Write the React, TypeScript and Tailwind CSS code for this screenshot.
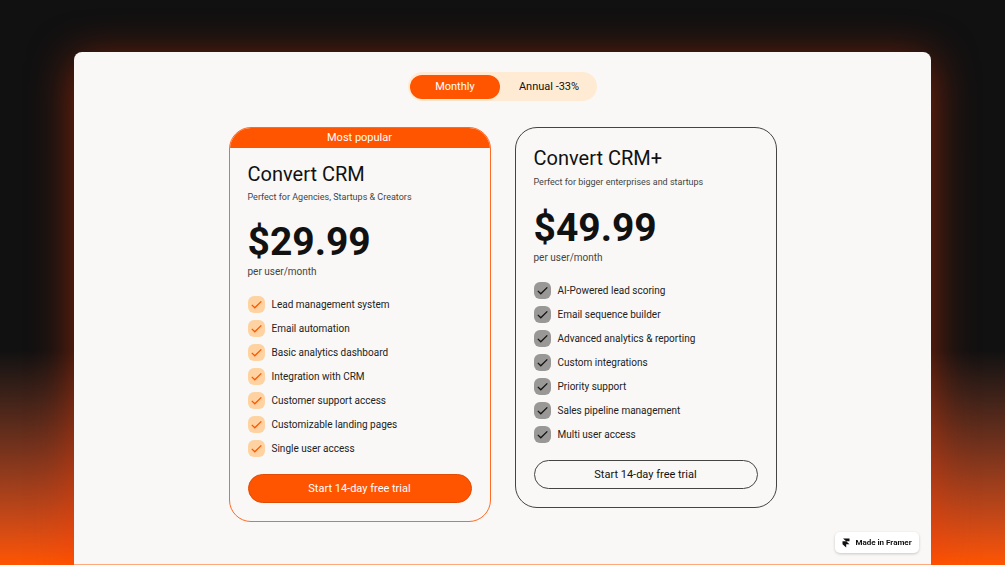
import React, { useState } from 'react';

type Plan = {
  name: string;
  tagline: string;
  price: string;
  features: string[];
  popular?: boolean;
};

const plans: Plan[] = [
  {
    name: 'Convert CRM',
    tagline: 'Perfect for Agencies, Startups & Creators',
    price: '$29.99',
    popular: true,
    features: [
      'Lead management system',
      'Email automation',
      'Basic analytics dashboard',
      'Integration with CRM',
      'Customer support access',
      'Customizable landing pages',
      'Single user access',
    ],
  },
  {
    name: 'Convert CRM+',
    tagline: 'Perfect for bigger enterprises and startups',
    price: '$49.99',
    features: [
      'AI-Powered lead scoring',
      'Email sequence builder',
      'Advanced analytics & reporting',
      'Custom integrations',
      'Priority support',
      'Sales pipeline management',
      'Multi user access',
    ],
  },
];

function CheckIcon() {
  return (
    <svg viewBox="0 0 17 17" className="size-full" fill="none" stroke="currentColor" strokeWidth="1.3" aria-hidden="true">
      <path d="M3.8 8.9 6.8 11.8 13.3 5.4" />
    </svg>
  );
}

function BillingToggle() {
  const [billing, setBilling] = useState('monthly');
  const base = 'h-6 rounded-full pt-px text-[11px] cursor-pointer';
  const active = 'bg-[#ff5500] text-white';

  return (
    <div className="flex items-center rounded-full bg-[#ffebd3] p-0.5 h-[29px]">
      <button
        type="button"
        aria-pressed={billing === 'monthly'}
        onClick={() => setBilling('monthly')}
        className={`${base} w-[90px] ${billing === 'monthly' ? active : 'text-[#111111]'}`}
      >
        Monthly
      </button>
      <button
        type="button"
        aria-pressed={billing === 'annual'}
        onClick={() => setBilling('annual')}
        className={`${base} px-4 ml-[3px] ${billing === 'annual' ? active : 'text-[#111111]'}`}
      >
        Annual -33%
      </button>
    </div>
  );
}

function PlanCard({ plan }: { plan: Plan }) {
  const { popular } = plan;

  return (
    <article
      className={`w-[262px] rounded-[22px] border overflow-hidden ${popular ? 'border-[#ff6a26]' : 'border-[#444444]'}`}
    >
      {popular && (
        <div className="bg-[#ff5500] h-5 text-center text-[11px] leading-5 text-white">Most popular</div>
      )}
      <div className={`px-[18px] pb-[18px] ${popular ? 'pt-3' : 'pt-4'}`}>
        <h2 className="text-[20px] leading-7 text-[#111111]">{plan.name}</h2>
        <p className={`text-[9px] leading-3 text-[#444444] ${popular ? 'mt-[3px]' : 'mt-1'}`}>{plan.tagline}</p>
        <p className={`text-[39px] leading-[44px] font-bold text-[#111111] ${popular ? 'mt-[17px]' : 'mt-[18px]'}`}>
          {plan.price}
        </p>
        <p className="text-[10px] leading-4 text-[#444444]">per user/month</p>
        <ul className="mt-4 flex flex-col gap-[7px]">
          {plan.features.map((feature) => (
            <li key={feature} className="flex items-center gap-[7px] text-[10px] leading-[17px] text-[#222222]">
              <span
                className={`size-[17px] shrink-0 rounded-[6px] ${popular ? 'bg-[#ffd3a1] text-[#ff5500]' : 'bg-[#999896] text-[#111111]'}`}
              >
                <CheckIcon />
              </span>
              {feature}
            </li>
          ))}
        </ul>
        <button
          type="button"
          className={`mt-[17px] h-[29px] w-full rounded-full border pt-px text-[11px] cursor-pointer ${popular ? 'border-[#e04c04] bg-[#ff5500] text-white' : 'border-[#444444] text-[#111111]'}`}
        >
          Start 14-day free trial
        </button>
      </div>
    </article>
  );
}

function FramerBadge() {
  return (
    <a
      href="#framer"
      className="fixed bottom-3 right-[86px] flex h-[21px] w-[84px] items-center justify-center gap-[5px] rounded-[5px] bg-white text-[8px] font-bold text-[#111111] shadow-[0_1px_3px_rgba(0,0,0,0.2)]"
    >
      <svg viewBox="0 0 8 10" className="h-[10px] w-2" fill="currentColor" aria-hidden="true">
        <path d="M1 0.5H7.5V3.3H4.2ZM0.5 3.3H4.2L7.5 6.3H4.2V9.5L0.5 6.3Z" />
      </svg>
      Made in Framer
    </a>
  );
}

export default function App() {
  return (
    <div className="min-h-screen bg-[#111111] bg-linear-to-b from-[#111111] from-62% to-[#ff5500] px-[74px] pt-[52px] font-[Roboto,sans-serif]">
      <main className="flex flex-col items-center rounded-t-[8px] border-b border-[#ffa77d] bg-[#f9f8f6] pt-5 pb-[42px] shadow-[0_8px_44px_rgba(255,55,0,0.5)]">
        <BillingToggle />
        <section className="mt-[26px] flex items-start gap-6">
          {plans.map((plan) => (
            <PlanCard key={plan.name} plan={plan} />
          ))}
        </section>
      </main>
      <FramerBadge />
    </div>
  );
}
